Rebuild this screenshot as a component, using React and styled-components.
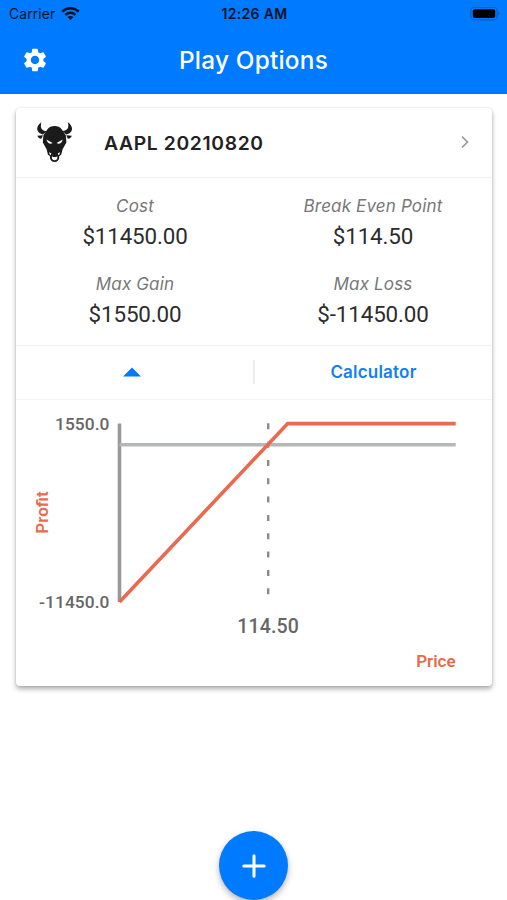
import React from 'react';
import styled, { createGlobalStyle } from 'styled-components';
import { MdSettings } from 'react-icons/md';

const GlobalStyle = createGlobalStyle`
  * { box-sizing: border-box; }
  body { margin: 0; background: #fff; overflow: hidden; }
`;

const Screen = styled.div`
  width: 507px;
  height: 900px;
  display: flex;
  flex-direction: column;
  overflow: hidden;
  background: #fff;
  font-family: Inter, "Liberation Sans", sans-serif;
`;

const TopArea = styled.header`
  height: 93.5px;
  flex: none;
  background: #007aff;
`;

const StatusBar = styled.div`
  display: grid;
  grid-template-columns: 1fr auto 1fr;
  align-items: center;
  height: 27px;
  padding: 0 7px 0 9px;
  color: #051226;
`;

const Carrier = styled.div`
  display: flex;
  align-items: center;
  gap: 6px;
  font-size: 13.8px;
  letter-spacing: 0.15px;
`;

const Clock = styled.div`
  font-size: 14px;
  font-weight: 600;
  letter-spacing: 0.35px;
`;

const BatterySlot = styled.div`
  display: flex;
  justify-content: flex-end;
`;

const NavBar = styled.div`
  display: grid;
  grid-template-columns: 70px 1fr 70px;
  align-items: center;
  height: 66px;
  color: #fff;
`;

const SettingsButton = styled.button`
  display: flex;
  justify-content: center;
  padding: 0;
  border: 0;
  background: none;
  color: #fff;
`;

const Title = styled.h1`
  margin: 0;
  text-align: center;
  font-size: 24.3px;
  font-weight: 500;
  letter-spacing: 0.25px;
`;

const Card = styled.section`
  width: 476px;
  height: 578px;
  margin: 14.5px 0 0 16px;
  flex: none;
  border-radius: 4px;
  background: #fff;
  box-shadow: 0 3px 5px rgba(0, 0, 0, 0.32), 0 0 2px rgba(0, 0, 0, 0.12);
`;

const CardHeader = styled.div`
  display: flex;
  align-items: center;
  height: 69.5px;
  padding: 0 22px 0 20px;
  border-bottom: 1px solid #f3f3f3;
`;

const Symbol = styled.h2`
  flex: 1;
  margin: 1px 0 0 30px;
  color: #222;
  font-size: 19.3px;
  font-weight: 600;
  letter-spacing: 0.65px;
`;

const Stats = styled.div`
  display: grid;
  grid-template-columns: 1fr 1fr;
  grid-auto-rows: 78px;
  height: 168px;
  padding-top: 15px;
  border-bottom: 1px solid #f3f3f3;
`;

const Stat = styled.div`
  text-align: center;
`;

const StatLabel = styled.div`
  color: #777;
  font-size: 17px;
  font-style: italic;
  font-weight: 450;
  line-height: 26px;
  letter-spacing: 0.15px;
`;

const StatValue = styled.div`
  margin-top: 5px;
  color: #2c2c2c;
  font-family: Roboto, sans-serif;
  font-size: 22.4px;
  line-height: 25px;
  letter-spacing: -0.15px;
`;

const Actions = styled.div`
  display: flex;
  align-items: center;
  height: 54px;
  border-bottom: 1px solid #f3f3f3;
`;

const Action = styled.button`
  flex: 1 1 0;
  display: flex;
  justify-content: center;
  padding: 0;
  border: 0;
  background: none;
  color: #1080f5;
  font-family: inherit;
  font-size: 17px;
  font-weight: 600;
  letter-spacing: 0.2px;
`;

const Caret = styled.svg`
  width: 18px;
  height: 10px;
  margin: 0 5px 1px 0;
`;

const Divider = styled.div`
  width: 2px;
  height: 24px;
  background: #ededed;
`;

const Chart = styled.svg`
  display: block;
  width: 476px;
  height: 286px;
`;

const ChartText = styled.text`
  font-family: Roboto, sans-serif;
  font-weight: ${(p) => p.$weight || 500};
  font-size: ${(p) => p.$size || 17.3}px;
  letter-spacing: ${(p) => p.$spacing || 0}px;
  fill: ${(p) => p.$color || '#666'};
`;

const Footer = styled.div`
  display: flex;
  justify-content: center;
  padding-top: 145px;
`;

const AddButton = styled.button`
  display: flex;
  align-items: center;
  justify-content: center;
  width: 69px;
  height: 69px;
  flex: none;
  padding: 0;
  border: 0;
  border-radius: 50%;
  background: #007aff;
  box-shadow: 0 3px 6px rgba(0, 0, 0, 0.3);
`;

const STATS = [
  ['Cost', '$11450.00'],
  ['Break Even Point', '$114.50'],
  ['Max Gain', '$1550.00'],
  ['Max Loss', '$-11450.00'],
];

const Wifi = () => (
  <svg width="19" height="14" viewBox="0 0 19 14" fill="none" stroke="#051226" strokeWidth="2.5">
    <path d="M1.2 4.7C5.8 .1 13.2 .1 17.8 4.7" />
    <path d="M4.4 7.9C7.3 5.1 11.7 5.1 14.6 7.9" />
    <path d="M9.5 13L6.5 10C8.2 8.5 10.8 8.5 12.5 10Z" fill="#051226" stroke="none" />
  </svg>
);

const Battery = () => (
  <svg width="30" height="14" viewBox="0 0 30 14">
    <rect x=".8" y=".4" width="26.4" height="12.4" rx="3.8" fill="none" stroke="#0560c4" strokeWidth="1.3" />
    <rect x="2.8" y="2.3" width="22.4" height="8.6" rx="2" fill="#000" />
    <path d="M28.3 4.6C29.9 5.3 29.9 7.9 28.3 8.6Z" fill="#0560c4" />
  </svg>
);

const Bull = () => (
  <svg width="38" height="42" viewBox="0 0 38 42" fill="#1b1b1b">
    <path d="M5.4 1.2C-.6 5.2-.4 12.2 7 13.4L10.7 10C5.6 9.8 3.8 6.6 5.4 1.2Z" />
    <path d="M31.8 1.2C37.8 5.2 37.6 12.2 30.2 13.4L26.5 10C31.6 9.8 33.4 6.6 31.8 1.2Z" />
    <path d="M1.4 14.8L7 14.2L5.5 17.6C3.6 18 2.1 16.8 1.4 14.8Z" />
    <path d="M35.8 14.8L30.2 14.2L31.7 17.6C33.6 18 35.1 16.8 35.8 14.8Z" />
    <path d="M18.6 5.1C21.6 5.1 24 6.3 25.7 8.2L29.8 14.2L30.4 21.6L26.6 28.2L25.3 33.6L21.4 37H15.8L11.9 33.6L10.6 28.2L6.8 21.6L7.4 14.2L11.5 8.2C13.2 6.3 15.6 5.1 18.6 5.1Z" />
    <g fill="#fff">
      <path d="M10.4 18.6L16.6 22C14.6 23.6 11.6 22.8 10.4 18.6Z" />
      <path d="M26.8 18.6L20.6 22C22.6 23.6 25.6 22.8 26.8 18.6Z" />
      <path d="M13 31.2L15.8 32.4L14.4 34.8Z" />
      <path d="M24.2 31.2L21.4 32.4L22.8 34.8Z" />
    </g>
    <circle cx="18.6" cy="36.4" r="3.7" fill="#fff" stroke="#1b1b1b" strokeWidth="1.9" />
    <path d="M15.4 32H21.8L20.6 36H16.6Z" />
  </svg>
);

export default function App() {
  return (
    <Screen>
      <GlobalStyle />
      <TopArea>
        <StatusBar>
          <Carrier>Carrier <Wifi /></Carrier>
          <Clock>12:26 AM</Clock>
          <BatterySlot><Battery /></BatterySlot>
        </StatusBar>
        <NavBar>
          <SettingsButton aria-label="Settings"><MdSettings size={28} /></SettingsButton>
          <Title>Play Options</Title>
        </NavBar>
      </TopArea>
      <Card>
        <CardHeader>
          <Bull />
          <Symbol>AAPL 20210820</Symbol>
          <svg width="10" height="14" viewBox="0 0 10 14" fill="none" stroke="#999" strokeWidth="1.7">
            <path d="M2 1.5L7.5 7L2 12.5" />
          </svg>
        </CardHeader>
        <Stats>
          {STATS.map(([label, value]) => (
            <Stat key={label}>
              <StatLabel>{label}</StatLabel>
              <StatValue>{value}</StatValue>
            </Stat>
          ))}
        </Stats>
        <Actions>
          <Action aria-label="Collapse">
            <Caret viewBox="0 0 18 10"><path d="M0 9.5L9 .5L18 9.5Z" fill="#007aff" /></Caret>
          </Action>
          <Divider />
          <Action>Calculator</Action>
        </Actions>
        <Chart viewBox="16 400 476 286">
          <path d="M119.5 423.5V602" stroke="#999" strokeWidth="3.6" />
          <path d="M119.5 444.7H455.7" stroke="#b5b8b7" strokeWidth="3.6" />
          <path d="M268.2 423.3V596" stroke="#8b8b8b" strokeWidth="2.4" strokeDasharray="6 12.33" />
          <path d="M119.5 602L287.7 423.6H455.7" fill="none" stroke="#e96a4f" strokeWidth="3.6" />
          <ChartText x="109.5" y="429.8" textAnchor="end" $spacing={0.1}>1550.0</ChartText>
          <ChartText x="109.5" y="608" textAnchor="end" $spacing={0.1}>-11450.0</ChartText>
          <ChartText x="268.2" y="632.6" textAnchor="middle" $size={19.5} $spacing={0.15}>114.50</ChartText>
          <ChartText x="455.6" y="666.8" textAnchor="end" $size={17} $weight={600} $color="#e96a4f">Price</ChartText>
          <ChartText transform="translate(47.5 512.5) rotate(-90)" textAnchor="middle" $size={17} $weight={600} $color="#e96a4f">Profit</ChartText>
        </Chart>
      </Card>
      <Footer>
        <AddButton aria-label="Add">
          <svg width="24" height="24" viewBox="0 0 24 24" stroke="#fff" strokeWidth="3" strokeLinecap="round">
            <path d="M12 1.8V22.2M1.8 12H22.2" />
          </svg>
        </AddButton>
      </Footer>
    </Screen>
  );
}
